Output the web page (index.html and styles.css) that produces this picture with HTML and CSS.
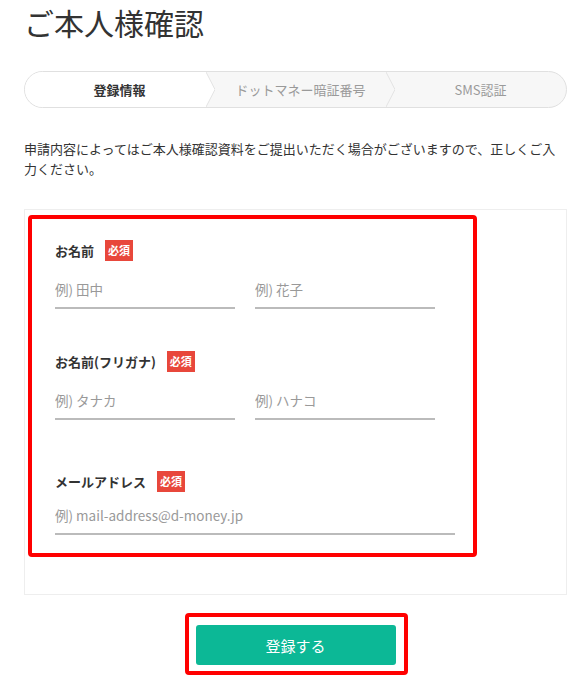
FILE: index.html
```html
<!DOCTYPE html>
<html lang="ja">
<head>
    <meta charset="UTF-8">
    <meta name="viewport" content="width=device-width, initial-scale=1.0">
    <title>ご本人様確認</title>
    <link rel="stylesheet" href="styles.css">
</head>
<body>

    <div class="page">
        <h1 class="page-title">ご本人様確認</h1>

        <div class="steps">
            <div class="step step-first step-current">登録情報</div>
            <svg class="step-arrow" width="9" height="35" viewBox="0 0 9 35" preserveAspectRatio="none">
                <polygon points="0,0 9,17.5 0,35" fill="#fff"/>
                <polyline points="0,0 9,17.5 0,35" fill="none" stroke="#e3e3e3" stroke-width="1"/>
            </svg>
            <div class="step">ドットマネー暗証番号</div>
            <svg class="step-arrow" width="9" height="35" viewBox="0 0 9 35" preserveAspectRatio="none">
                <polyline points="0,0 9,17.5 0,35" fill="none" stroke="#e3e3e3" stroke-width="1"/>
            </svg>
            <div class="step">SMS認証</div>
        </div>

        <p class="lead">申請内容によってはご本人様確認資料をご提出いただく場合がございますので、正しくご入力ください。</p>

        <div class="form-card">
            <div class="mark mark-form">
                <div class="field">
                    <div class="field-label">お名前<span class="required">必須</span></div>
                    <div class="field-inputs">
                        <input class="text-input" type="text" placeholder="例) 田中">
                        <input class="text-input" type="text" placeholder="例) 花子">
                    </div>
                </div>
                <div class="field field-kana">
                    <div class="field-label">お名前(フリガナ)<span class="required">必須</span></div>
                    <div class="field-inputs">
                        <input class="text-input" type="text" placeholder="例) タナカ">
                        <input class="text-input" type="text" placeholder="例) ハナコ">
                    </div>
                </div>
                <div class="field field-mail">
                    <div class="field-label">メールアドレス<span class="required">必須</span></div>
                    <div class="field-inputs">
                        <input class="text-input text-input-wide" type="email" placeholder="例) mail-address@d-money.jp">
                    </div>
                </div>
            </div>
        </div>

        <div class="actions">
            <div class="mark mark-button">
                <button class="submit" type="button">登録する</button>
            </div>
        </div>
    </div>

</body>
</html>
```

FILE: styles.css
```css
body {
    margin: 0;
    font-family: "Noto Sans CJK JP", "Noto Sans", sans-serif;
    color: #333;
    background: #fff;
}

.page {
    padding: 0 20px 0 24px;
}

.page-title {
    margin: 4px 0 0;
    font-size: 30px;
    font-weight: 400;
    line-height: 36px;
    color: #333;
}

/* steps */
.steps {
    display: flex;
    margin-top: 31px;
    height: 37px;
    box-sizing: border-box;
    border: 1px solid #e0e0e0;
    border-radius: 19px;
    background: #f7f7f7;
    overflow: hidden;
}

.step {
    flex: 1;
    display: flex;
    justify-content: center;
    align-items: center;
    font-size: 13px;
    color: #9a9a9a;
}

.step-first {
    flex: 0 0 181px;
    box-sizing: border-box;
    padding-left: 8px;
    background: #fff;
}

.step-current {
    color: #333;
    font-weight: 700;
}

.step-arrow {
    flex: 0 0 9px;
    display: block;
}

.lead {
    margin: 31px 0 0;
    font-size: 13px;
    line-height: 20px;
}

/* form */
.form-card {
    margin-top: 30px;
    border: 1px solid #eee;
    padding: 5px 3px 37px;
}

.mark {
    border: 4px solid #f00;
    border-radius: 4px;
}

.mark-form {
    width: 449px;
    box-sizing: border-box;
    padding: 21px 0 18px 23px;
}

.field-kana {
    margin-top: 42px;
}

.field-mail {
    margin-top: 51px;
}

.field-label {
    display: flex;
    align-items: center;
    height: 21px;
    font-size: 13px;
    font-weight: 700;
    color: #333;
}

.required {
    margin-left: 11px;
    height: 21px;
    line-height: 21px;
    padding: 0 3px;
    background: #e8473b;
    color: #fff;
    font-size: 11px;
    font-weight: 700;
}

.field-inputs {
    display: flex;
    gap: 20px;
    margin-top: 12px;
}

.field-mail .field-inputs {
    margin-top: 7px;
}

.text-input {
    width: 180px;
    height: 36px;
    box-sizing: border-box;
    padding: 0 0 3px;
    border: none;
    border-bottom: 2px solid #bbb;
    background: transparent;
    font-family: "Noto Sans CJK JP", "Noto Sans", sans-serif;
    font-size: 13.5px;
    color: #333;
    outline: none;
}

.text-input::placeholder {
    color: #999;
}

.text-input-wide {
    width: 400px;
}

/* button */
.actions {
    display: flex;
    justify-content: center;
    margin-top: 18px;
    padding-left: 1px;
}

.mark-button {
    padding: 8px 8px 6px 7px;
}

.submit {
    display: block;
    width: 200px;
    height: 40px;
    border: none;
    border-radius: 3px;
    background-color: #0cb896;
    color: #fff;
    font-family: "Noto Sans CJK JP", "Noto Sans", sans-serif;
    font-size: 15px;
    cursor: pointer;
}
```
